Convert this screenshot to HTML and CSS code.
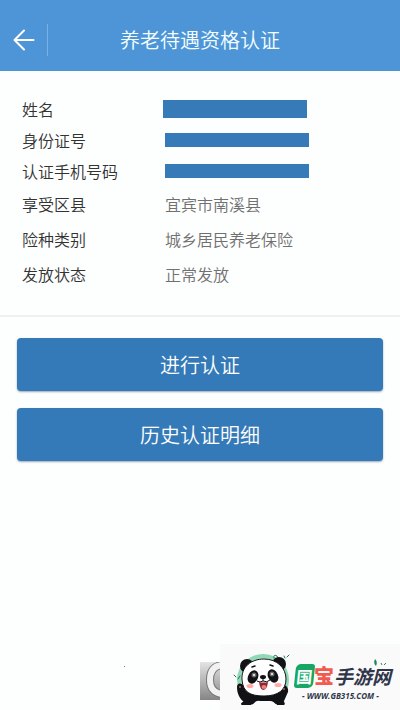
FILE: index.html
```html
<!DOCTYPE html>
<html lang="zh-CN">
<head>
<meta charset="utf-8">
<meta name="viewport" content="width=device-width, initial-scale=1">
<title>养老待遇资格认证</title>
<link rel="stylesheet" href="styles.css">
</head>
<body>
<header class="topbar">
  <button class="back" type="button" aria-label="返回">
    <svg width="22" height="22" viewBox="0 0 22 22" fill="none" stroke="currentColor" stroke-width="2" stroke-linecap="round" stroke-linejoin="round"><path d="M20.500 11H2M11 1.500L1.500 11L11 20.500"/></svg>
  </button>
  <h1 class="title">养老待遇资格认证</h1>
</header>
<main>
  <dl class="info">
    <div class="row"><dt>姓名</dt><dd><span class="mask mask-name"></span></dd></div>
    <div class="row"><dt>身份证号</dt><dd><span class="mask"></span></dd></div>
    <div class="row"><dt>认证手机号码</dt><dd><span class="mask"></span></dd></div>
    <div class="row tall"><dt>享受区县</dt><dd>宜宾市南溪县</dd></div>
    <div class="row tall"><dt>险种类别</dt><dd>城乡居民养老保险</dd></div>
    <div class="row tall"><dt>发放状态</dt><dd>正常发放</dd></div>
  </dl>
  <div class="actions">
    <button class="action" type="button">进行认证</button>
    <button class="action" type="button">历史认证明细</button>
  </div>
</main>
<span class="speck"></span>
<aside class="watermark">
  <svg class="fragment" width="20" height="38" viewBox="0 0 20 38">
    <defs><linearGradient id="metal" x2="0" y2="1"><stop offset="0" stop-color="#e4e4e4"/><stop offset=".5" stop-color="#b5b5b5"/><stop offset="1" stop-color="#858585"/></linearGradient></defs>
    <path fill="url(#metal)" d="M0 0H20V38H0Z"/>
    <path d="M24 3C13 3 10 10 10 18S14 32 24 32" fill="none" stroke="#777" stroke-width="8"/>
    <path d="M24 3C13 3 10 10 10 18S14 32 24 32" fill="none" stroke="#f1f1f1" stroke-width="6"/>
  </svg>
  <div class="brand">
    <svg class="panda" width="72" height="66" viewBox="0 0 72 66">
      <circle cx="43" cy="36" r="26" fill="#91d8b7"/>
      <circle cx="43" cy="36" r="22" fill="#bcebd3"/>
      <path d="M54 14Q53 10 57 12L59 16M65 14L64 12M67 13L69 11M16 33L14 31M18 35L20 32" fill="none" stroke="#1d7855" stroke-linecap="round"/>
      <ellipse cx="27" cy="22" rx="7" ry="7" fill="#111215"/>
      <ellipse cx="59" cy="20" rx="7" ry="7" fill="#111215"/>
      <path d="M17 43C17 39 21 38 24 42L31 50H56L60 43C64 38 69 43 68 48L64 57Q58 61 44 61T24 58C20 55 17 50 17 43Z" fill="#111215"/>
      <path d="M24 57Q19 60 22 61H31Q35 56 39 57H50Q54 56 57 61H64Q66 60 63 56Z" fill="#111215"/>
      <path d="M32 62Q35 56 40 57H50Q54 57 57 62Z" fill="#fbfbfb"/>
      <path d="M22 36C21 23 31 15 44 15S66 24 66 35S58 52 44 52S23 48 22 36Z" fill="#fff" stroke="#111215"/>
      <ellipse cx="33" cy="33" rx="5" ry="7" transform="rotate(25 33 33)" fill="#111215"/>
      <ellipse cx="53" cy="32" rx="5" ry="7" transform="rotate(-25 53 32)" fill="#111215"/>
      <circle cx="34" cy="31" r="2.500" fill="#6d6968"/><circle cx="52" cy="30" r="2.500" fill="#6d6968"/>
      <circle cx="34" cy="31" r="1" fill="#fff"/><circle cx="52" cy="30" r="1" fill="#fff"/>
      <path d="M32 23L35 22M50 21L53 22" stroke="#111215" stroke-width="1.500" stroke-linecap="round"/>
      <ellipse cx="43" cy="33" rx="3" ry="2" fill="#111215"/>
      <path d="M43 35V37M37 37Q40 39 43 37Q47 39 50 36" fill="none" stroke="#111215"/>
      <path d="M39 38Q43 39 48 38Q47 46 43 46Q40 45 39 38Z" fill="#8c2931"/>
      <ellipse cx="44" cy="43" rx="2.500" ry="2" fill="#f57b7c"/>
      <ellipse cx="30" cy="42" rx="3.500" ry="2" fill="#ffaaa5"/><ellipse cx="58" cy="41" rx="3.500" ry="2" fill="#ffaaa5"/>
      <circle cx="20" cy="43" r="1" fill="#ad625e"/><circle cx="64" cy="45" r="1" fill="#ad625e"/>
    </svg>
    <div class="brand-text">
      <div class="brand-name"><span class="seal">国</span><span class="treasure">宝</span><span class="rest">手游网</span></div>
      <div class="brand-url">- WWW.GB315.COM -</div>
    </div>
    <svg class="leaf" width="14" height="9" viewBox="0 0 14 9"><path d="M2 1Q5 4 3 8Q0 5 2 1Z" fill="#168b59"/><path d="M8 5L9 7M11 7L13 5" stroke="#397b65"/></svg>
  </div>
</aside>
</body>
</html>
```
FILE: styles.css
```css
* { box-sizing: border-box; }

body {
  margin: 0;
  min-height: 100vh;
  position: relative;
  background: #fdfefe;
  color: #333;
  font-family: "Noto Sans CJK SC", sans-serif;
  font-weight: 350;
}

button {
  border: 0;
  color: #fff;
  font: inherit;
  cursor: pointer;
}

.topbar {
  display: grid;
  grid-template-columns: 48px 1fr 48px;
  align-items: center;
  padding: 24px 0 15px;
  background: #4e95d8;
  color: #f4ffff;
}

.back {
  display: flex;
  align-items: center;
  height: 32px;
  padding: 0 0 0 13px;
  background: none;
  border-right: 1px solid #79b1e4;
}

.title {
  margin: 0;
  font-size: 20px;
  line-height: 32px;
  font-weight: 350;
  text-align: center;
}

.info {
  margin: 0;
  padding: 22px 22px 24px;
  border-bottom: 2px solid #eff0f1;
  font-size: 16px;
  line-height: 24px;
}

.row {
  display: grid;
  grid-template-columns: 143px 1fr;
  align-items: center;
  min-height: 31px;
}

.tall { min-height: 35px; }

dd {
  margin: 0;
  color: #707070;
}

.mask {
  display: block;
  width: 144px;
  height: 14px;
  background: #367ab8;
}

.mask-name {
  height: 18px;
  margin-left: -2px;
}

.actions {
  display: grid;
  gap: 17px;
  padding: 21px 17px;
}

.action {
  min-height: 53px;
  border-radius: 4px;
  background: #357ab8;
  box-shadow: 0 1px 2px #9ba8b5;
  font-size: 20px;
}

.speck {
  position: absolute;
  left: 124px;
  bottom: 43px;
  width: 1px;
  height: 1px;
  background: #35af84;
}

.watermark {
  position: absolute;
  right: 0;
  bottom: 0;
  display: flex;
  align-items: flex-end;
}

.fragment { margin-bottom: 10px; }

.brand {
  position: relative;
  display: flex;
  width: 180px;
  height: 66px;
  background: #fafafa;
}

.brand-text {
  padding-top: 20px;
  color: #30364a;
  white-space: nowrap;
}

.brand-name {
  display: flex;
  align-items: center;
  height: 24px;
  margin-left: 3px;
  font-size: 19px;
  font-weight: 700;
  line-height: 24px;
}

.seal {
  width: 19px;
  border-radius: 5px 3px;
  background: #16a765;
  color: #fff;
  font-size: 16px;
  text-align: center;
  transform: skewX(-6deg);
}

.treasure {
  color: #f25b50;
  font-size: 20px;
  font-weight: 900;
}

.rest {
  font-size: 19px;
  font-style: italic;
}

.brand-url {
  margin-left: 10px;
  font-family: "Open Sans", sans-serif;
  font-size: 8px;
  font-style: italic;
  font-weight: 700;
  line-height: 15px;
}

.leaf {
  position: absolute;
  top: 14px;
  right: 13px;
}
```
